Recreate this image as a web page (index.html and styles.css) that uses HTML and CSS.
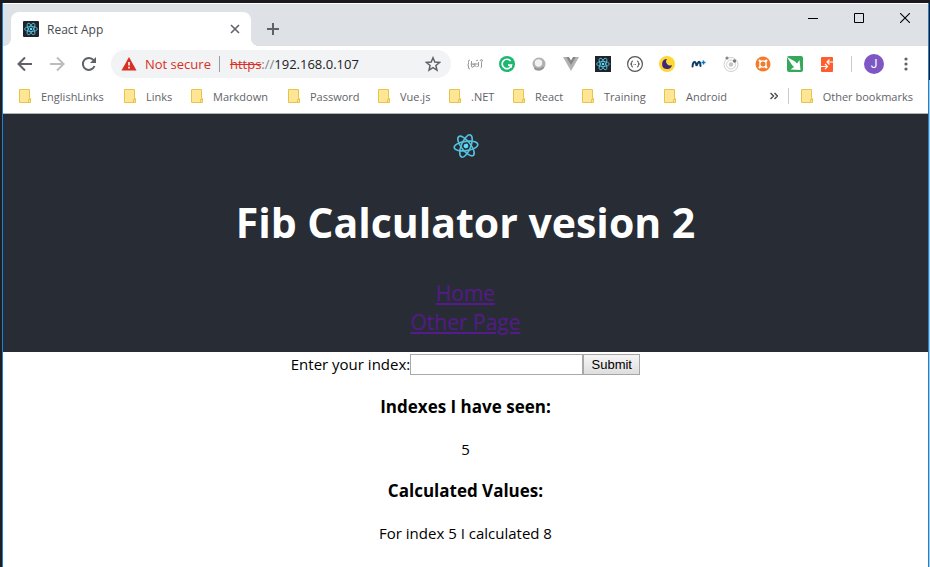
FILE: index.html
```html
<!DOCTYPE html>
<html lang="en">
<head>
<meta charset="utf-8">
<title>React App</title>
<link rel="stylesheet" href="styles.css">
</head>
<body>
<svg class="defs" aria-hidden="true">
  <symbol id="atom" viewBox="0 0 24 24">
    <g fill="none" stroke="#53c1de" stroke-width="1.5">
      <ellipse cx="12" cy="12" rx="11" ry="4.3"/>
      <ellipse cx="12" cy="12" rx="11" ry="4.3" transform="rotate(60 12 12)"/>
      <ellipse cx="12" cy="12" rx="11" ry="4.3" transform="rotate(120 12 12)"/>
    </g>
    <circle cx="12" cy="12" r="2.2" fill="#61dafb"/>
  </symbol>
  <symbol id="folder" viewBox="0 0 12 14">
    <path d="M.5.5h10v9h1v4H.5z" fill="#ffe694" stroke="#e8c44c"/>
    <path d="M9.5 13V10.500h2" fill="none" stroke="#e8c44c"/>
  </symbol>
</svg>
<div class="window">
  <header class="tabstrip">
    <div class="tab">
      <svg class="favicon" viewBox="0 0 16 16"><rect width="16" height="16" rx="1" fill="#20232a"/><use href="#atom" x="1" y="1" width="14" height="14"/></svg>
      <span class="tab-title">React App</span>
      <button class="tab-close" aria-label="Close tab"><svg width="10" height="10" viewBox="0 0 10 10"><path d="M1 1l8 8M9 1L1 9" stroke="#5f6368" stroke-width="1.6"/></svg></button>
    </div>
    <button class="new-tab" aria-label="New tab"><svg width="12" height="12" viewBox="0 0 12 12"><path d="M6 0v12M0 6h12" stroke="#5f6368" stroke-width="2"/></svg></button>
    <div class="controls">
      <button aria-label="Minimize"><svg width="10" height="10" viewBox="0 0 10 10"><path d="M0 5.500h10" stroke="#000"/></svg></button>
      <button aria-label="Maximize"><svg width="10" height="10" viewBox="0 0 10 10"><path d="M.5.5h9v9h-9z" fill="none" stroke="#000"/></svg></button>
      <button aria-label="Close"><svg width="10" height="10" viewBox="0 0 10 10"><path d="M0 0l10 10M10 0L0 10" stroke="#000" stroke-width="1.100"/></svg></button>
    </div>
  </header>

  <nav class="toolbar" aria-label="Browser toolbar">
    <div class="history">
      <button aria-label="Back"><svg viewBox="0 0 16 16"><path d="M15 8H2M8 1.500L1.500 8 8 14.500" fill="none" stroke="#5f6368" stroke-width="2"/></svg></button>
      <button aria-label="Forward"><svg viewBox="0 0 16 16"><path d="M1 8h13M8 1.500L14.500 8 8 14.500" fill="none" stroke="#babcbe" stroke-width="2"/></svg></button>
      <button aria-label="Reload"><svg viewBox="0 0 16 16"><path d="M13.500 10A6 6 0 1 1 12.600 4.200" fill="none" stroke="#5f6368" stroke-width="2"/><path d="M15 1v6H9z" fill="#5f6368"/></svg></button>
    </div>
    <div class="omnibox">
      <svg class="warning" width="16" height="14" viewBox="0 0 16 14"><path d="M8 0l7.500 13.500H.5z" fill="#d93025"/><path d="M8 5v3.500M8 9.800v1.700" stroke="#fff" stroke-width="1.600"/></svg>
      <span class="insecure">Not secure</span>
      <span class="url"><s>https</s><i>://</i>192.168.0.107</span>
      <button class="star" aria-label="Bookmark this page"><svg width="16" height="16" viewBox="0 0 16 16"><path d="M8 1.800l1.800 4.300 4.700.4-3.600 3 1.100 4.600L8 11.700l-4 2.400 1.100-4.600-3.600-3 4.700-.4z" fill="none" stroke="#5f6368" stroke-width="1.500"/></svg></button>
    </div>
    <div class="extensions">
      <button aria-label="Braces"><svg viewBox="0 0 16 16"><path d="M3 4Q1 4 1.500 6.500T.5 9Q2 9 1.500 11T3 13M4.500 5v5q0 2 1.500 1t1.500-2q-1-2-2 0M8 7v4M9.500 10q1 2 2 0V6M9 5l2-1M13.500 12q1.500 0 1-3t1-5q-2-1-2.500 1M3.500 8h8" fill="none" stroke="#999" stroke-width="1"/></svg></button>
      <button aria-label="Grammar"><svg viewBox="0 0 16 16"><circle cx="8" cy="8" r="8" fill="#1cb770"/><path d="M11.600 5A4.700 4.700 0 1 0 12.500 9H9" fill="none" stroke="#fff" stroke-width="1.700"/><path d="M9 9h4v3z" fill="#fff"/></svg></button>
      <button aria-label="Eye"><svg viewBox="0 0 16 16"><circle cx="8" cy="8" r="6.500" fill="#b0b0b0"/><circle cx="7.500" cy="7" r="3.700" fill="#f2f2f2"/><path d="M3.500 12a6 6 0 0 0 9-1" fill="none" stroke="#929292" stroke-width="2"/></svg></button>
      <button aria-label="Vue tools"><svg viewBox="0 0 16 16"><path d="M0 1h16L8 15z" fill="#b2b2b2"/><path d="M3.300 1h9.400L8 9z" fill="#858585"/><path d="M6 1h4L8 4.500z" fill="#fff"/></svg></button>
      <button aria-label="React tools"><svg viewBox="0 0 16 16"><rect width="16" height="16" fill="#20232a"/><use href="#atom" x="1" y="1" width="14" height="14"/></svg></button>
      <button aria-label="JSON"><svg viewBox="0 0 16 16"><circle cx="8" cy="8" r="7.400" fill="#fff" stroke="#555" stroke-width="1.200"/><path d="M5.800 5Q4.500 5 4.700 6.500T3.500 8q1.400 0 1.200 1.500T5.800 11M10.200 5q1.300 0 1.100 1.500T12.500 8q-1.400 0-1.200 1.500T10.200 11" fill="none" stroke="#333"/><path d="M6.500 8.500h3" stroke="#777" stroke-dasharray="1 .5"/></svg></button>
      <button aria-label="Dark mode"><svg viewBox="0 0 16 16"><circle cx="8" cy="8" r="8" fill="#fdd835"/><path d="M8 3a5 5 0 1 0 5 6 4 4 0 0 1-5-6" fill="#40277a"/></svg></button>
      <button aria-label="Movistar"><svg viewBox="0 0 16 16"><path d="M1.500 10.500Q2 6 3.500 6T5.500 10Q7.500 5 8.500 6t1 4" fill="none" stroke="#0b3d66" stroke-width="2" stroke-linecap="round"/><path d="M12.500 4.500v4M10.500 6.500h4" stroke="#087bb5" stroke-width="1.400"/></svg></button>
      <button aria-label="Orbit"><svg viewBox="0 0 16 16"><g fill="none" stroke="#cfcfcf"><circle cx="8" cy="8.500" r="7"/><circle cx="8" cy="8.500" r="4.500"/></g><circle cx="8" cy="8.500" r="2.200" fill="#c4c4c4"/><circle cx="4" cy="2" r="1.600" fill="#888"/><circle cx="11.500" cy="5" r="1.700" fill="#777"/></svg></button>
      <button aria-label="Wheel"><svg viewBox="0 0 16 16"><circle cx="8" cy="8" r="7.500" fill="#f47b29"/><circle cx="8" cy="8" r="3.200" fill="none" stroke="#fff" stroke-width="1.300"/><path d="M4 4l2 2M12 4l-2 2M4 12l2-2M12 12l-2-2" stroke="#fff" stroke-width="2.200"/><circle cx="8" cy="8" r="2.200" fill="#f47b29"/></svg></button>
      <button aria-label="Arrow"><svg viewBox="0 0 16 16"><rect width="16" height="16" rx="2" fill="#35a85b"/><path d="M0 1l8 4.500 2 2L12.500 4l1 10-10-.5L7 11 5 9z" fill="#fff"/></svg></button>
      <button aria-label="Interceptor"><svg viewBox="0 0 16 16"><rect x="2" y="1" width="12" height="15" rx="1" fill="#ff5d2d"/><path d="M2 10.500h6M6 8l2.500 2.500L6 13M14 6H8M10.500 3.500L8 6l2.500 2.500" fill="none" stroke="#fff" stroke-width="1.200"/></svg></button>
    </div>
    <span class="rule"></span>
    <button class="avatar" aria-label="Profile">J</button>
    <button class="menu" aria-label="Menu"><svg width="4" height="14" viewBox="0 0 4 14" fill="#5f6368"><circle cx="2" cy="2" r="1.600"/><circle cx="2" cy="7" r="1.600"/><circle cx="2" cy="12" r="1.600"/></svg></button>
  </nav>

  <nav class="bookmarks" aria-label="Bookmarks">
    <div class="bookmark-list">
      <a href="#"><svg><use href="#folder"/></svg>EnglishLinks</a>
      <a href="#"><svg><use href="#folder"/></svg>Links</a>
      <a href="#"><svg><use href="#folder"/></svg>Markdown</a>
      <a href="#"><svg><use href="#folder"/></svg>Password</a>
      <a href="#"><svg><use href="#folder"/></svg>Vue.js</a>
      <a href="#"><svg><use href="#folder"/></svg>.NET</a>
      <a href="#"><svg><use href="#folder"/></svg>React</a>
      <a href="#"><svg><use href="#folder"/></svg>Training</a>
      <a href="#"><svg><use href="#folder"/></svg>Android</a>
    </div>
    <button class="more" aria-label="More bookmarks"><svg width="8" height="8" viewBox="0 0 8 8"><path d="M.5 1l3 3-3 3M4.500 1l3 3-3 3" fill="none" stroke="#4c5054" stroke-width="1.500"/></svg></button>
    <span class="rule"></span>
    <a href="#"><svg><use href="#folder"/></svg>Other bookmarks</a>
  </nav>

  <div class="page">
    <header class="app-header">
      <svg class="logo" viewBox="0 0 24 24"><use href="#atom" transform="rotate(-8 12 12)"/></svg>
      <h1>Fib Calculator vesion 2</h1>
      <a href="#home">Home</a>
      <a href="#other">Other Page</a>
    </header>
    <main>
      <form>
        <label for="index">Enter your index:</label><input id="index" type="text"><button type="button">Submit</button>
      </form>
      <h3>Indexes I have seen:</h3>
      <p>5</p>
      <h3>Calculated Values:</h3>
      <p>For index 5 I calculated 8</p>
    </main>
  </div>
</div>
</body>
</html>
```
FILE: styles.css
```css
* { box-sizing: border-box; }

body {
  margin: 0;
  min-height: 100vh;
  display: flex;
  padding: 3px 1px 0 2px;
  background: linear-gradient(#1b1a1e 80px, transparent 80px), linear-gradient(90deg, #1e1e20 50%, #a9c8e2 50%);
  font-family: "Open Sans", "Noto Sans", sans-serif;
}

button {
  padding: 0;
  border: 0;
  background: none;
  font: inherit;
}

svg { display: block; }
.defs { position: absolute; width: 0; height: 0; }

.window {
  flex: 1;
  border: solid #1883d7;
  border-width: 0 1px;
  background: #fff;
}

.tabstrip {
  display: flex;
  height: 43px;
  padding-left: 8px;
  border-top: 1px solid #fff;
  background: #dee1e6;
}

.tab {
  position: relative;
  display: flex;
  align-items: center;
  width: 240px;
  margin-top: 8px;
  padding: 0 11px 0 12px;
  border-radius: 8px 8px 0 0;
  background: #fff;
}
.tab::before,
.tab::after {
  content: "";
  position: absolute;
  bottom: 0;
  width: 8px;
  height: 8px;
}
.tab::before { right: 100%; background: radial-gradient(circle at 0 0, transparent 8px, #fff 8px); }
.tab::after { left: 100%; background: radial-gradient(circle at 100% 0, transparent 8px, #fff 8px); }

.favicon { width: 16px; height: 16px; }
.tab-title { flex: 1; margin-left: 8px; color: #45494d; font-size: 12px; }
.new-tab { margin-left: 16px; padding-top: 8px; }

.controls { display: flex; height: 28px; margin-left: auto; }
.controls button { display: grid; place-items: center; width: 46px; }

.toolbar {
  display: flex;
  align-items: center;
  height: 36px;
  padding: 0 20px 0 14px;
}
.history { display: flex; gap: 16px; margin-right: 14px; }
.history svg { width: 16px; height: 16px; }

.omnibox {
  flex: 1;
  display: flex;
  align-items: center;
  height: 28px;
  padding: 0 10px;
  border-radius: 14px;
  background: #f1f3f4;
  font-size: 13px;
}
.insecure {
  margin: 0 10px 0 8px;
  padding-right: 8px;
  border-right: 1px solid #9a9da1;
  color: #d93025;
  line-height: 16px;
}
.url { color: #202124; }
.url s { color: #d93025; }
.url i { color: #80868b; font-style: normal; }
.star { margin-left: auto; }

.extensions { display: flex; gap: 16px; margin: 0 16px; }
.extensions svg { width: 16px; height: 16px; }
.rule { width: 1px; height: 16px; background: #c8cacd; }

.avatar {
  width: 20px;
  height: 20px;
  margin: 0 20px 0 12px;
  border-radius: 50%;
  background: #7e57c2;
  color: #fff;
  font: 12px Roboto, sans-serif;
}

.bookmarks {
  display: flex;
  align-items: center;
  height: 32px;
  padding: 0 15px 3px 16px;
  border-bottom: 1px solid #b2b5b8;
  color: #5f6368;
  font-size: 11px;
}
.bookmark-list {
  flex: 1;
  display: grid;
  grid-template-columns: 105px 67px 97px 90px 71px 64px 69px 82px 1fr;
}
.bookmarks a {
  display: flex;
  align-items: center;
  gap: 10px;
  color: inherit;
  text-decoration: none;
  white-space: nowrap;
}
.bookmarks a svg { flex: none; width: 12px; height: 14px; }
.more { margin-right: 10px; }
.bookmarks .rule { margin-right: 12px; }

.app-header {
  display: flex;
  flex-direction: column;
  align-items: center;
  padding: 19px 0 15px;
  background: #282c34;
  color: #fff;
  font-size: 21px;
  line-height: 29px;
}
.logo { width: 26px; height: 26px; }
h1 { margin: 34px 0 28px; font-size: 41px; line-height: 58px; }
.app-header a { color: #551a8b; }

main {
  color: #000;
  font-size: 15px;
  line-height: 20px;
  text-align: center;
}
form { display: flex; justify-content: center; padding-top: 2px; }
form input {
  width: 173px;
  height: 21px;
  padding: 1px;
  border: 1px solid #a9a9a9;
}
form button {
  width: 57px;
  height: 21px;
  border: 1px solid #a6a6a6;
  background: linear-gradient(#f6f6f6, #dedede);
  font: 13px "Liberation Sans", Arial, sans-serif;
}
h3 { margin: 20px 0; font-size: 17px; line-height: 24px; }
p { margin: 0; }
```
